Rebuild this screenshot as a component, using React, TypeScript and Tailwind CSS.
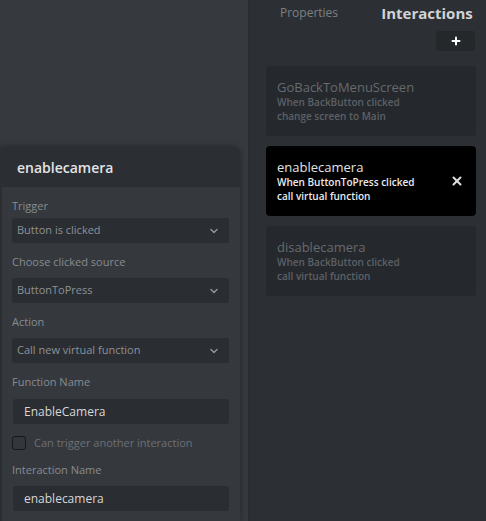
import React from "react";
import { ChevronDown, X, Plus } from "lucide-react";

const font = { fontFamily: '"Open Sans", "Noto Sans", sans-serif' };

interface Card {
  title: string;
  line1: string;
  line2: string;
  active?: boolean;
}

const cards: Card[] = [
  { title: "GoBackToMenuScreen", line1: "When BackButton clicked", line2: "change screen to Main" },
  { title: "enablecamera", line1: "When ButtonToPress clicked", line2: "call virtual function", active: true },
  { title: "disablecamera", line1: "When BackButton clicked", line2: "call virtual function" },
];

function Label({ text, className = "" }: { text: string; className?: string }) {
  return <div className={`h-[16px] text-[11px] leading-[19px] text-[#878b90] ${className}`}>{text}</div>;
}

function Select({ value }: { value: string }) {
  return (
    <div className="h-[25px] w-[217px] rounded-[3px] bg-[#2a2d31] flex items-center justify-between pl-[5px] pr-[9px]">
      <span className="text-[11px] text-[#8e9297]">{value}</span>
      <ChevronDown className="h-[12px] w-[12px] text-[#8e9297]" strokeWidth={3} />
    </div>
  );
}

function Input({ value }: { value: string }) {
  return (
    <div className="ml-[1px] h-[25px] w-[216px] rounded-[3px] bg-[#2a2d31] flex items-center pl-[11px]">
      <span className="text-[12px] font-medium text-[#d6d7d9]">{value}</span>
    </div>
  );
}

export default function App() {
  return (
    <div className="w-[486px] h-[521px] flex overflow-hidden select-none" style={font}>
      {/* Canvas side with the floating editor */}
      <div className="w-[248px] h-full bg-[#363a3f] flex flex-col">
        <div className="h-[147px] shrink-0" />
        <div className="w-[240px] flex-1 flex flex-col bg-[#2b2e32] rounded-tr-[8px] shadow-[0_0_6px_rgba(0,0,0,0.4)]">
          <div className="h-[40px] shrink-0 flex items-center pl-[17px] text-[14px] font-semibold text-[#e3e4e6]">
            enablecamera
          </div>
          <div className="flex-1 ml-[2px] bg-[#35393e] pl-[10px] pt-[9px]">
            <Label text="Trigger" className="mb-[6px]" />
            <Select value="Button is clicked" />
            <Label text="Choose clicked source" className="mt-[9px] mb-[10px]" />
            <Select value="ButtonToPress" />
            <Label text="Action" className="mt-[9px] mb-[10px]" />
            <Select value="Call new virtual function" />
            <Label text="Function Name" className="mt-[9px] mb-[11px]" />
            <Input value="EnableCamera" />
            <div className="mt-[12px] flex items-center gap-[8px]">
              <div className="h-[14px] w-[14px] rounded-[3px] border border-[#16181a] bg-[#33363b]" />
              <span className="text-[11px] leading-[14px] text-[#6c7075]">Can trigger another interaction</span>
            </div>
            <Label text="Interaction Name" className="mt-[10px] mb-[10px] text-[#6f7378]" />
            <Input value="enablecamera" />
          </div>
        </div>
      </div>

      <div className="w-[2px] h-full bg-[#2a2d31]" />

      {/* Interactions panel */}
      <div className="flex-1 h-full bg-[#2c3034] flex flex-col">
        <div className="h-[26px] flex">
          <div className="flex-1 flex items-center justify-center text-[12px] text-[#7c8085]">Properties</div>
          <div className="flex-1 flex items-center justify-center text-[15px] font-bold text-[#d2d3d5]">Interactions</div>
        </div>
        <div className="mt-[5px] flex justify-end pr-[11px]">
          <div className="h-[20px] w-[39px] rounded-[3px] bg-[#25282b] flex items-center justify-center">
            <Plus className="h-[12px] w-[12px] text-white" strokeWidth={4} />
          </div>
        </div>
        <div className="mt-[15px] ml-[16px] mr-[10px] flex flex-col gap-[10px]">
          {cards.map((c) => (
            <div
              key={c.title}
              className={`h-[70px] rounded-[4px] flex items-center justify-between pl-[11px] pr-[12px] ${
                c.active ? "bg-black" : "bg-[#25282c]"
              }`}
            >
              <div className="flex flex-col">
                <span className={`text-[13px] leading-[16px] ${c.active ? "text-[#e2e3e5]" : "text-[#666a6f]"}`}>
                  {c.title}
                </span>
                <span
                  className={`text-[10px] leading-[14px] font-semibold ${
                    c.active ? "text-[#ececec]" : "text-[#5d6166]"
                  }`}
                >
                  {c.line1}
                </span>
                <span
                  className={`text-[10px] leading-[14px] font-semibold ${
                    c.active ? "text-[#ececec]" : "text-[#5d6166]"
                  }`}
                >
                  {c.line2}
                </span>
              </div>
              {c.active && <X className="h-[14px] w-[14px] text-[#dcdcdc]" strokeWidth={3.5} />}
            </div>
          ))}
        </div>
      </div>
    </div>
  );
}
